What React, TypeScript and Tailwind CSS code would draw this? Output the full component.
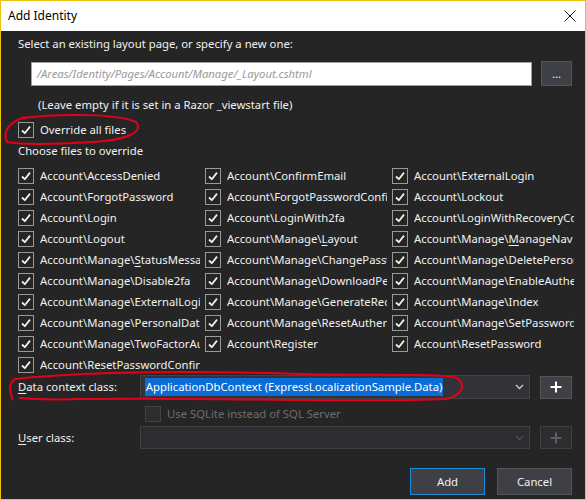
import React from "react";

const files: string[][] = [
  ["Account\\AccessDenied", "Account\\ConfirmEmail", "Account\\ExternalLogin"],
  ["Account\\ForgotPassword", "Account\\ForgotPasswordConfirmation", "Account\\Lockout"],
  ["Account\\Login", "Account\\LoginWith2fa", "Account\\LoginWithRecoveryCode"],
  ["Account\\Logout", "Account\\Manage\\_Layout", "Account\\Manage\\_ManageNav"],
  ["Account\\Manage\\_StatusMessage", "Account\\Manage\\ChangePassword", "Account\\Manage\\DeletePersonalData"],
  ["Account\\Manage\\Disable2fa", "Account\\Manage\\DownloadPersonalData", "Account\\Manage\\EnableAuthenticator"],
  ["Account\\Manage\\ExternalLogins", "Account\\Manage\\GenerateRecoveryCodes", "Account\\Manage\\Index"],
  ["Account\\Manage\\PersonalData", "Account\\Manage\\ResetAuthenticator", "Account\\Manage\\SetPassword"],
  ["Account\\Manage\\TwoFactorAuthentication", "Account\\Register", "Account\\ResetPassword"],
  ["Account\\ResetPasswordConfirmation"],
];

const font = { fontFamily: '"Noto Sans", "Open Sans", sans-serif' };

function Check({ disabled }: { disabled?: boolean }) {
  if (disabled) {
    return <span className="w-[16px] h-[16px] shrink-0 border border-[#434346] bg-[#2d2d30]" />;
  }
  return (
    <span className="w-[16px] h-[16px] shrink-0 border border-[#999999] bg-[#252526] flex items-center justify-center">
      <svg width="12" height="12" viewBox="0 0 12 12">
        <path d="M2 6.5 L4.8 9.2 L10 2.6" fill="none" stroke="#f1f1f1" strokeWidth="1.8" strokeLinejoin="round" />
      </svg>
    </span>
  );
}

// WPF access-key style: "_X" underlines the next letter
function Label({ text }: { text: string }) {
  const i = text.indexOf("_");
  if (i < 0) return <>{text}</>;
  return (
    <>
      {text.slice(0, i)}
      <span className="underline underline-offset-2">{text[i + 1]}</span>
      {text.slice(i + 2)}
    </>
  );
}

function Chevron({ color }: { color: string }) {
  return (
    <svg width="9" height="6" viewBox="0 0 9 6">
      <path d="M1 1 L4.5 4.5 L8 1" fill="none" stroke={color} strokeWidth="1.4" />
    </svg>
  );
}

function Plus({ color }: { color: string }) {
  return (
    <svg width="12" height="12" viewBox="0 0 12 12">
      <path d="M6 0.5 V11.5 M0.5 6 H11.5" stroke={color} strokeWidth="2" />
    </svg>
  );
}

export default function App() {
  return (
    <div
      className="relative w-[586px] h-[500px] border border-[#eec010] flex flex-col text-[11.3px] overflow-hidden"
      style={font}
    >
      <div className="h-[30px] bg-white flex items-center justify-between pl-[7px] pr-[9px] text-black text-[12px] shrink-0">
        <span>Add Identity</span>
        <svg width="12" height="12" viewBox="0 0 12 12">
          <path d="M0.5 0.5 L11.5 11.5 M11.5 0.5 L0.5 11.5" stroke="#111" strokeWidth="1" />
        </svg>
      </div>

      <div className="flex-1 bg-[#252526] text-[#f1f1f1] pl-[17px] pr-[13px] pt-[5px] leading-[16px]">
        <div>Select an existing layout page, or specify a new one:</div>

        <div className="flex items-center mt-[9px] ml-[13px] gap-[9px]">
          <div className="w-[502px] h-[24px] bg-white border border-[#a0a0a0] flex items-center pl-[5px] italic text-[#9a9a9a]">
            /Areas/Identity/Pages/Account/Manage/_Layout.cshtml
          </div>
          <div className="w-[31px] h-[25px] bg-[#3f3f46] border border-[#555558] flex items-center justify-center text-[#f1f1f1]">
            ...
          </div>
        </div>

        <div className="mt-[11px] ml-[20px]">(Leave empty if it is set in a Razor _viewstart file)</div>

        <div className="mt-[9px] flex items-center gap-[6px]">
          <Check />
          <span>Override all files</span>
        </div>

        <div className="mt-[5px]">Choose files to override</div>

        <div className="mt-[9px] grid grid-cols-[187px_187px_187px] gap-y-[5px]">
          {files.flat().map((f) => (
            <div key={f} className="flex items-center gap-[6px] h-[16px]">
              <Check />
              <span className="w-[160px] overflow-hidden whitespace-nowrap">
                <Label text={f} />
              </span>
            </div>
          ))}
        </div>

        <div className="mt-[2px] flex items-center">
          <span className="w-[122px]">
            <span className="underline underline-offset-2">D</span>ata context class:
          </span>
          <div className="w-[391px] h-[24px] bg-[#333337] border border-[#434346] flex items-center justify-between pl-[4px] pr-[5px]">
            <span className="bg-[#0a6cd6] text-white px-[1px] leading-[18px]">
              ApplicationDbContext (ExpressLocalizationSample.Data)
            </span>
            <Chevron color="#c8c8c8" />
          </div>
          <div className="ml-[10px] w-[32px] h-[23px] bg-[#3f3f46] border border-[#555558] flex items-center justify-center">
            <Plus color="#ffffff" />
          </div>
        </div>

        <div className="mt-[7px] ml-[127px] flex items-center gap-[6px] text-[#6d6d6d]">
          <Check disabled />
          <span>Use SQLite instead of SQL Server</span>
        </div>

        <div className="mt-[4px] flex items-center">
          <span className="w-[122px]">
            <span className="underline underline-offset-2">U</span>ser class:
          </span>
          <div className="w-[391px] h-[23px] bg-[#2d2d30] border border-[#3f3f46] flex items-center justify-end pr-[5px]">
            <Chevron color="#4d4d50" />
          </div>
          <div className="ml-[10px] w-[32px] h-[23px] bg-[#2d2d30] border border-[#3f3f46] flex items-center justify-center">
            <Plus color="#5e5e62" />
          </div>
        </div>

        <div className="mt-[19px] flex justify-end gap-[12px]">
          <div className="w-[75px] h-[27px] bg-[#3f3f46] border border-[#1f8ad2] flex items-center justify-center">
            Add
          </div>
          <div className="w-[75px] h-[27px] bg-[#3f3f46] border border-[#555558] flex items-center justify-center">
            Cancel
          </div>
        </div>
      </div>

      <svg className="absolute left-0 top-0 pointer-events-none" width="586" height="500" viewBox="0 0 586 500">
        <path
          d="M22 117 C60 112, 118 113, 135 121 C143 131, 126 139, 92 141 C58 143, 22 144, 6 141 C2 133, 5 122, 24 116"
          fill="none"
          stroke="#e4001b"
          strokeWidth="2"
        />
        <path
          d="M12 399 C8 390, 8 382, 14 378 C90 370, 200 370, 300 373 C380 375, 440 372, 456 377 C465 384, 462 394, 445 398 C360 402, 200 396, 80 398 C50 399, 30 398, 18 397"
          fill="none"
          stroke="#e4001b"
          strokeWidth="2"
        />
      </svg>
    </div>
  );
}
